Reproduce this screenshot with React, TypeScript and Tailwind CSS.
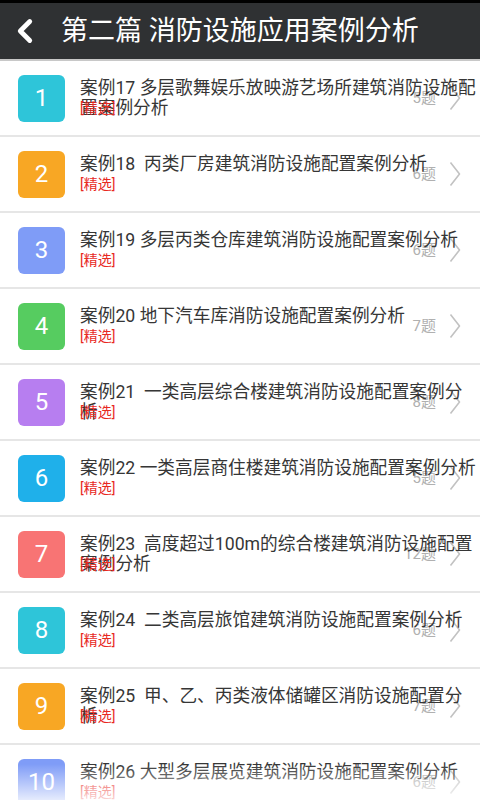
import { ChevronLeft } from "lucide-react";

const cases = [
  { no: 1, title: "案例17 多层歌舞娱乐放映游艺场所建筑消防设施配置案例分析", count: 5, color: "bg-[#2ec5d9]" },
  { no: 2, title: "案例18\u00a0\u00a0丙类厂房建筑消防设施配置案例分析", count: 6, color: "bg-[#f8a724]" },
  { no: 3, title: "案例19 多层丙类仓库建筑消防设施配置案例分析", count: 6, color: "bg-[#7f9cf7]" },
  { no: 4, title: "案例20 地下汽车库消防设施配置案例分析", count: 7, color: "bg-[#56cc60]" },
  { no: 5, title: "案例21\u00a0\u00a0一类高层综合楼建筑消防设施配置案例分析", count: 8, color: "bg-[#b77ef0]" },
  { no: 6, title: "案例22 一类高层商住楼建筑消防设施配置案例分析", count: 5, color: "bg-[#1fb0ea]" },
  { no: 7, title: "案例23\u00a0\u00a0高度超过100m的综合楼建筑消防设施配置案例分析", count: 12, color: "bg-[#f87474]" },
  { no: 8, title: "案例24\u00a0\u00a0二类高层旅馆建筑消防设施配置案例分析", count: 6, color: "bg-[#2ec5d9]" },
  { no: 9, title: "案例25\u00a0\u00a0甲、乙、丙类液体储罐区消防设施配置分析", count: 7, color: "bg-[#f8a724]" },
  { no: 10, title: "案例26 大型多层展览建筑消防设施配置案例分析", count: 6, color: "bg-[#7f9cf7]" },
];

function Arrow() {
  return (
    <svg width="12" height="26" viewBox="0 0 12 26" fill="none" aria-hidden="true">
      <polyline points="1.5,1.5 10.5,13 1.5,24.5" stroke="#c2c2c2" strokeWidth="1.6" strokeLinejoin="round" />
    </svg>
  );
}

function CaseRow({ item }: { item: (typeof cases)[number] }) {
  return (
    <div className="relative flex h-[76px] items-center border-b-2 border-[#e6e6e6] bg-white">
      <div
        className={`ml-[18px] flex h-[47px] w-[47px] shrink-0 items-center justify-center rounded-[6px] text-[24px] text-white ${item.color}`}
      >
        {item.no}
      </div>
      <div className="absolute right-[19px] top-0 flex h-full items-center">
        <span className="mr-[13px] text-[15px] text-[#b0b0b0]">{item.count}题</span>
        <Arrow />
      </div>
      <div className="relative ml-[15px] w-[400px]">
        <div className="h-[20px] text-[17.7px] leading-[20px] text-[#363636]">{item.title}</div>
        <div className="h-[20px] text-[14px] leading-[20px] text-[#e8291f]">[精选]</div>
      </div>
    </div>
  );
}

export default function App() {
  return (
    <div
      className="relative h-[800px] w-[480px] overflow-hidden bg-white"
      style={{ fontFamily: 'Roboto, "Noto Sans CJK SC", sans-serif' }}
    >
      <div className="h-[3px] bg-black" />
      <header className="flex h-[56px] items-center bg-[#2f3133] text-white">
        <ChevronLeft className="ml-[6px] h-[38px] w-[38px]" strokeWidth={3} />
        <h1 className="ml-[17px] text-[27px] leading-none">第二篇 消防设施应用案例分析</h1>
      </header>
      <div className="h-[2px] bg-[#c8c8c8]" />
      <div>
        {cases.map((item) => (
          <CaseRow key={item.no} item={item} />
        ))}
      </div>
      <div className="pointer-events-none absolute inset-x-0 bottom-0 h-[36px] bg-gradient-to-b from-white/0 to-white/80" />
    </div>
  );
}
